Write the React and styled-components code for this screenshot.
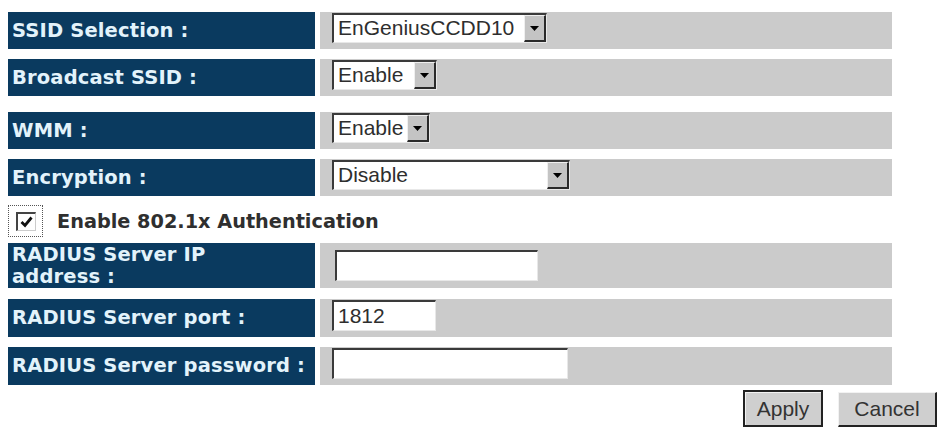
import React from "react";
import styled, { createGlobalStyle } from "styled-components";

const Global = createGlobalStyle`
  html, body { margin: 0; padding: 0; background: #ffffff; }
  body { font-family: "Liberation Sans", Arial, sans-serif; }
`;

const Page = styled.div`
  width: 942px;
  height: 437px;
  box-sizing: border-box;
  padding: 12px 5px 0 8px;
  display: flex;
  flex-direction: column;
  overflow: hidden;
`;

const Row = styled.div`
  width: 884px;
  display: grid;
  grid-template-columns: 307px 1fr;
  column-gap: 5px;
  height: ${(p) => p.$h || 37}px;
  margin-top: ${(p) => p.$mt || 0}px;
`;

const Label = styled.div`
  background: #0a3a5f;
  color: #e3f3fb;
  font-family: "DejaVu Sans", Verdana, sans-serif;
  font-weight: bold;
  font-size: 19.5px;
  line-height: 22px;
  letter-spacing: 0.15px;
  padding: 0 4px;
  display: flex;
  align-items: center;
  white-space: nowrap;
`;

const Value = styled.div`
  background: #cbcbcb;
  display: flex;
  align-items: ${(p) => (p.$center ? "center" : "flex-start")};
  padding: ${(p) => (p.$center ? "0" : "1px")} 0 0 ${(p) => p.$pl || 12}px;
`;

const SelectBox = styled.div`
  width: ${(p) => p.$w}px;
  height: 30px;
  box-sizing: border-box;
  background: #ffffff;
  border-top: 2px solid #3a3a3a;
  border-left: 2px solid #3a3a3a;
  border-right: 1px solid #e8e8e8;
  border-bottom: 1px solid #e8e8e8;
  display: flex;
  align-items: stretch;
`;

const SelectText = styled.span`
  flex: 1;
  font-family: "Liberation Sans", Arial, sans-serif;
  font-size: 21px;
  line-height: 26px;
  color: #2e2e2e;
  padding-left: 4px;
  white-space: nowrap;
  overflow: hidden;
`;

const ArrowButton = styled.span`
  width: 22px;
  box-sizing: border-box;
  background: #c4c4c4;
  border-top: 1px solid #efefef;
  border-left: 1px solid #efefef;
  border-right: 2px solid #2a2a2a;
  border-bottom: 2px solid #2a2a2a;
  display: flex;
  align-items: center;
  justify-content: center;
`;

const TextInput = styled.input`
  width: ${(p) => p.$w}px;
  height: 31px;
  box-sizing: border-box;
  margin: 0;
  background: #ffffff;
  border-top: 2px solid #3a3a3a;
  border-left: 2px solid #3a3a3a;
  border-right: 1px solid #e8e8e8;
  border-bottom: 1px solid #e8e8e8;
  font-family: "Liberation Sans", Arial, sans-serif;
  font-size: 21px;
  color: #2e2e2e;
  padding: 0 4px;
  outline: none;
`;

const CheckRow = styled.label`
  display: flex;
  align-items: center;
  height: 36px;
  margin-top: 7px;
  gap: 14px;
  cursor: pointer;
`;

const FocusRing = styled.span`
  display: flex;
  align-items: center;
  justify-content: center;
  width: 35px;
  height: 32px;
  box-sizing: border-box;
  border: 1px dotted #555;
`;

const CheckBox = styled.span`
  width: 20px;
  height: 19px;
  box-sizing: border-box;
  background: #ffffff;
  border-top: 2px solid #444;
  border-left: 2px solid #444;
  border-right: 1px solid #ccc;
  border-bottom: 1px solid #ccc;
  display: flex;
  align-items: center;
  justify-content: center;
`;

const CheckText = styled.span`
  font-family: "DejaVu Sans", Verdana, sans-serif;
  font-weight: bold;
  font-size: 19.3px;
  color: #2f2f2f;
`;

const ButtonRow = styled.div`
  display: flex;
  justify-content: flex-end;
  align-items: flex-end;
  gap: 15px;
  margin-top: 5px;
`;

const Button = styled.button`
  width: ${(p) => p.$w}px;
  height: ${(p) => p.$h}px;
  box-sizing: border-box;
  margin: 0;
  padding: 0;
  background: #cfcfcf;
  font-family: "Liberation Sans", Arial, sans-serif;
  font-size: 21px;
  color: #333333;
  border-top: ${(p) => (p.$default ? "2px solid #222" : "1px solid #f2f2f2")};
  border-left: ${(p) => (p.$default ? "2px solid #222" : "1px solid #f2f2f2")};
  border-right: 2px solid #222;
  border-bottom: 2px solid #222;
  box-shadow: ${(p) => (p.$default ? "inset 1px 1px 0 #f2f2f2" : "none")};
`;

const Arrow = () => (
  <svg width="9" height="5" viewBox="0 0 9 5">
    <path d="M0 0 H9 L4.5 5 Z" fill="#000" />
  </svg>
);

const Select = ({ w, value }) => (
  <SelectBox $w={w}>
    <SelectText>{value}</SelectText>
    <ArrowButton>
      <Arrow />
    </ArrowButton>
  </SelectBox>
);

export default function App() {
  return (
    <>
      <Global />
      <Page>
        <Row>
          <Label>SSID Selection :</Label>
          <Value>
            <Select w={215} value="EnGeniusCCDD10" />
          </Value>
        </Row>
        <Row $mt={10}>
          <Label>Broadcast SSID :</Label>
          <Value>
            <Select w={105} value="Enable" />
          </Value>
        </Row>
        <Row $mt={16}>
          <Label>WMM :</Label>
          <Value>
            <Select w={98} value="Enable" />
          </Value>
        </Row>
        <Row $mt={10}>
          <Label>Encryption :</Label>
          <Value>
            <Select w={238} value="Disable" />
          </Value>
        </Row>
        <CheckRow>
          <FocusRing>
            <CheckBox>
              <svg width="13" height="12" viewBox="0 0 13 12">
                <path d="M1.5 6 L5 9.5 L11.5 1.5" fill="none" stroke="#111" strokeWidth="2.8" />
              </svg>
            </CheckBox>
          </FocusRing>
          <CheckText>Enable 802.1x Authentication</CheckText>
        </CheckRow>
        <Row $mt={4} $h={45}>
          <Label>
            RADIUS Server IP
            <br />
            address :
          </Label>
          <Value $center $pl={15}>
            <TextInput $w={203} defaultValue="" />
          </Value>
        </Row>
        <Row $mt={11} $h={38}>
          <Label>RADIUS Server port :</Label>
          <Value>
            <TextInput $w={104} defaultValue="1812" />
          </Value>
        </Row>
        <Row $mt={10} $h={38}>
          <Label>RADIUS Server password :</Label>
          <Value>
            <TextInput $w={236} type="password" defaultValue="" />
          </Value>
        </Row>
        <ButtonRow>
          <Button $w={80} $h={37} $default>Apply</Button>
          <Button $w={99} $h={35}>Cancel</Button>
        </ButtonRow>
      </Page>
    </>
  );
}
